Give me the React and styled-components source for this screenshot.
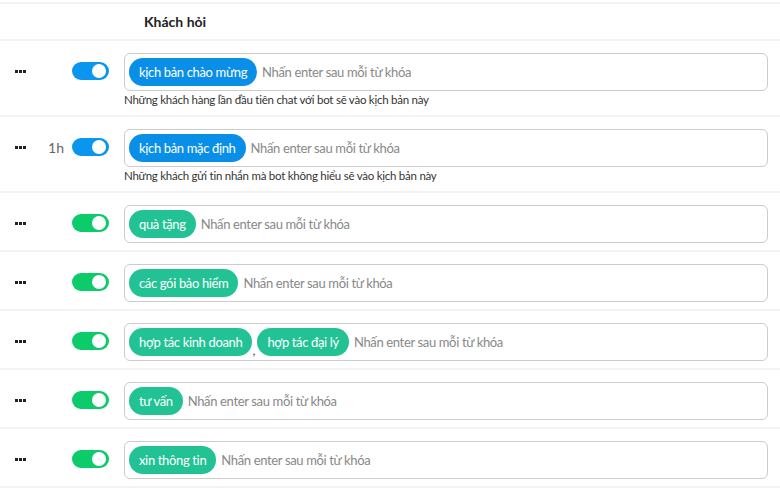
import React from "react";
import styled, { createGlobalStyle } from "styled-components";

const GlobalStyle = createGlobalStyle`
  body {
    margin: 0;
    background: #fff;
    font-family: "Lato", "Noto Sans", sans-serif;
    color: #333;
  }
`;

const Table = styled.div`
  padding-top: 2px;
`;

const HeaderRow = styled.div`
  height: 35px;
  display: flex;
  align-items: center;
  padding-left: 144px;
  border-top: 2px solid #f3f3f3;
  border-bottom: 2px solid #f3f3f3;
  font-size: 14px;
  font-weight: 700;
  color: #222;
`;

const Row = styled.div`
  display: flex;
  align-items: flex-start;
  padding: 12px 12px 7px 0;
  border-bottom: 2px solid #f3f3f3;
`;

const Controls = styled.div`
  width: 109px;
  height: 36px;
  flex-shrink: 0;
  display: flex;
  align-items: center;
  padding-left: 15px;
  box-sizing: border-box;
`;

const Right = styled.div`
  margin-left: auto;
  display: flex;
  align-items: center;
  gap: 8px;
`;

const Delay = styled.span`
  font-size: 14px;
  color: #666;
`;

const Toggle = styled.div`
  width: 37px;
  height: 18px;
  border-radius: 9px;
  background: ${(p) => (p.color === "blue" ? "#0a96ef" : "#0ccb6a")};
  position: relative;
  &::after {
    content: "";
    position: absolute;
    right: 3px;
    top: 2px;
    width: 14px;
    height: 14px;
    border-radius: 50%;
    background: #fff;
  }
`;

const Body = styled.div`
  flex: 1;
  margin-left: 15px;
`;

const Field = styled.div`
  height: 38px;
  box-sizing: border-box;
  border: 1px solid #ccc;
  border-radius: 6px;
  display: flex;
  align-items: center;
  padding: 0 4px;
`;

const Tag = styled.span`
  height: 28px;
  border-radius: 14px;
  padding: 0 10px;
  display: inline-flex;
  align-items: center;
  font-size: 13px;
  letter-spacing: -0.35px;
  color: #fff;
  white-space: nowrap;
  background: ${(p) => (p.color === "blue" ? "#0a8fe8" : "#22c295")};
`;

const Sep = styled.span`
  width: 5px;
  align-self: flex-end;
  margin-bottom: 3px;
  font-size: 13px;
  line-height: 1;
  color: #555;
  text-indent: 0;
`;

const Placeholder = styled.span`
  margin-left: 5px;
  font-size: 13px;
  letter-spacing: -0.35px;
  color: #888;
  white-space: nowrap;
`;

const Note = styled.div`
  font-size: 11.5px;
  letter-spacing: -0.25px;
  line-height: 17px;
  color: #333;
`;

const Dots = () => (
  <svg width="11" height="3" viewBox="0 0 11 3">
    <rect x="0" y="0" width="3" height="3" fill="#222" />
    <rect x="4" y="0" width="3" height="3" fill="#222" />
    <rect x="8" y="0" width="3" height="3" fill="#222" />
  </svg>
);

const rows = [
  {
    tags: ["kịch bản chào mừng"],
    color: "blue",
    note: "Những khách hàng lần đầu tiên chat với bot sẽ vào kịch bản này",
  },
  {
    tags: ["kịch bản mặc định"],
    color: "blue",
    delay: "1h",
    note: "Những khách gửi tin nhắn mà bot không hiểu sẽ vào kịch bản này",
  },
  { tags: ["quà tặng"], color: "green" },
  { tags: ["các gói bảo hiểm"], color: "green" },
  { tags: ["hợp tác kinh doanh", "hợp tác đại lý"], color: "green" },
  { tags: ["tư vấn"], color: "green" },
  { tags: ["xin thông tin"], color: "green" },
];

export default function App() {
  return (
    <>
      <GlobalStyle />
      <Table>
        <HeaderRow>Khách hỏi</HeaderRow>
        {rows.map((r, i) => (
          <Row key={i}>
            <Controls>
              <Dots />
              <Right>
                {r.delay && <Delay>{r.delay}</Delay>}
                <Toggle color={r.color} />
              </Right>
            </Controls>
            <Body>
              <Field>
                {r.tags.map((t, j) => (
                  <React.Fragment key={j}>
                    {j > 0 && <Sep>,</Sep>}
                    <Tag color={r.color}>{t}</Tag>
                  </React.Fragment>
                ))}
                <Placeholder>Nhấn enter sau mỗi từ khóa</Placeholder>
              </Field>
              {r.note && <Note>{r.note}</Note>}
            </Body>
          </Row>
        ))}
      </Table>
    </>
  );
}
